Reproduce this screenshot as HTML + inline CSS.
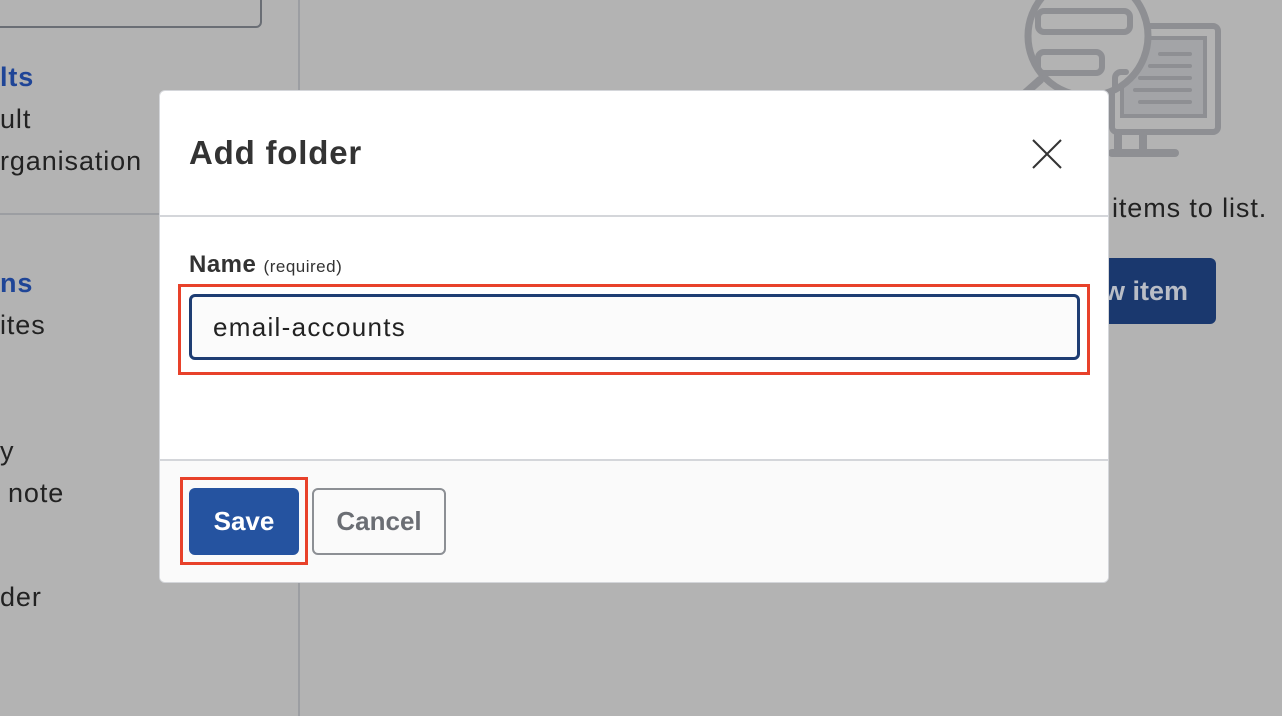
<!DOCTYPE html>
<html><head><style>
body{margin:0;width:1282px;height:716px;overflow:hidden;background:#b3b3b3;font-family:"Liberation Sans",sans-serif;position:relative;color:#222}
.a{position:absolute;white-space:nowrap}
.t{font-size:27px;letter-spacing:0.9px}
</style></head><body>
<div class="a" style="left:-10px;top:-20px;width:272px;height:48px;border:2px solid #6a6e75;border-radius:6px;box-sizing:border-box"></div>
<div class="a" style="left:0;top:213px;width:299px;height:2px;background:#9c9ea2"></div>
<div class="a" style="left:298px;top:0;width:2px;height:716px;background:#9c9ea2"></div>
<div class="a t" style="left:0;top:62px;font-weight:bold;color:#1f4597">lts</div>
<div class="a t" style="left:0;top:104px">ult</div>
<div class="a t" style="left:0;top:146px">rganisation</div>
<div class="a t" style="left:0;top:268px;font-weight:bold;color:#1f4597">ns</div>
<div class="a t" style="left:0;top:310px">ites</div>
<div class="a t" style="left:0;top:436px">y</div>
<div class="a t" style="left:8px;top:478px">note</div>
<div class="a t" style="left:0;top:582px">der</div>
<svg class="a" style="left:1000px;top:0" width="282" height="170" fill="none" stroke="#8e8f93" stroke-linecap="round">
<rect x="1112" y="26" width="106" height="106" rx="5" stroke-width="6" transform="translate(-1000 0)"/>
<rect x="122" y="38" width="83" height="78" fill="#a3a4a7" stroke-width="4"/>
<g stroke-width="4"><line x1="160" y1="54" x2="190" y2="54"/><line x1="150" y1="66" x2="190" y2="66"/><line x1="140" y1="78" x2="190" y2="78"/><line x1="135" y1="90" x2="190" y2="90"/><line x1="140" y1="102" x2="190" y2="102"/></g>
<g stroke-width="8"><line x1="118" y1="135" x2="118" y2="150"/><line x1="143" y1="135" x2="143" y2="150"/><line x1="112" y1="153" x2="175" y2="153"/></g>
<circle cx="88" cy="36" r="60" fill="#b3b3b3" stroke-width="7"/>
<rect x="38" y="11" width="92" height="21" rx="6" stroke-width="6"/>
<rect x="38" y="52" width="64" height="21" rx="6" stroke-width="6"/>
<path d="M126 72 h-5 a6 6 0 0 0 -6 6 v12" stroke-width="6"/>
<line x1="40" y1="80" x2="22" y2="96" stroke-width="8"/>
</svg>
<div class="a t" style="left:1112px;top:193px">items to list.</div>
<div class="a" style="left:1100px;top:258px;width:116px;height:66px;background:#1a386e;border-radius:6px;color:#b9bdc6;font-size:27px;font-weight:bold;line-height:66px;padding-left:4px;box-sizing:border-box">w item</div>

<div class="a" style="left:159px;top:90px;width:950px;height:493px;background:#fff;border:1px solid #d4d6da;border-radius:6px;box-sizing:border-box;overflow:hidden">
 <div class="a" style="left:29px;top:43px;font-size:33px;font-weight:bold;color:#333;letter-spacing:0.8px">Add folder</div>
 <svg class="a" style="left:872px;top:48px" width="30" height="30" stroke="#333" stroke-width="2"><line x1="1" y1="1" x2="29" y2="29"/><line x1="29" y1="1" x2="1" y2="29"/></svg>
 <div class="a" style="left:0;top:124px;width:950px;height:2px;background:#d4d6da"></div>
 <div class="a" style="left:29px;top:160px;font-size:24px;font-weight:bold;color:#333;letter-spacing:0.5px">Name <span style="font-size:17px;font-weight:normal">(required)</span></div>
 <div class="a" style="left:18px;top:193px;width:912px;height:91px;border:3px solid #e8412a;box-sizing:border-box"></div>
 <div class="a" style="left:29px;top:203px;width:891px;height:66px;border:3px solid #1e3d73;border-radius:6px;box-sizing:border-box;background:#fbfbfb;font-size:26px;letter-spacing:1.3px;line-height:60px;padding-left:21px;color:#222">email-accounts</div>
 <div class="a" style="left:0;top:368px;width:950px;height:125px;background:#fafafa;border-top:2px solid #d4d6da"></div>
 <div class="a" style="left:20px;top:386px;width:128px;height:88px;border:3px solid #e8412a;box-sizing:border-box"></div>
 <div class="a" style="left:29px;top:397px;width:110px;height:67px;background:#2553a0;border-radius:6px;color:#fff;font-size:26px;font-weight:bold;text-align:center;line-height:67px">Save</div>
 <div class="a" style="left:152px;top:397px;width:134px;height:67px;border:2px solid #8c8f94;border-radius:6px;box-sizing:border-box;color:#6b6e74;font-size:26px;font-weight:bold;text-align:center;line-height:63px">Cancel</div>
</div>
</body></html>
